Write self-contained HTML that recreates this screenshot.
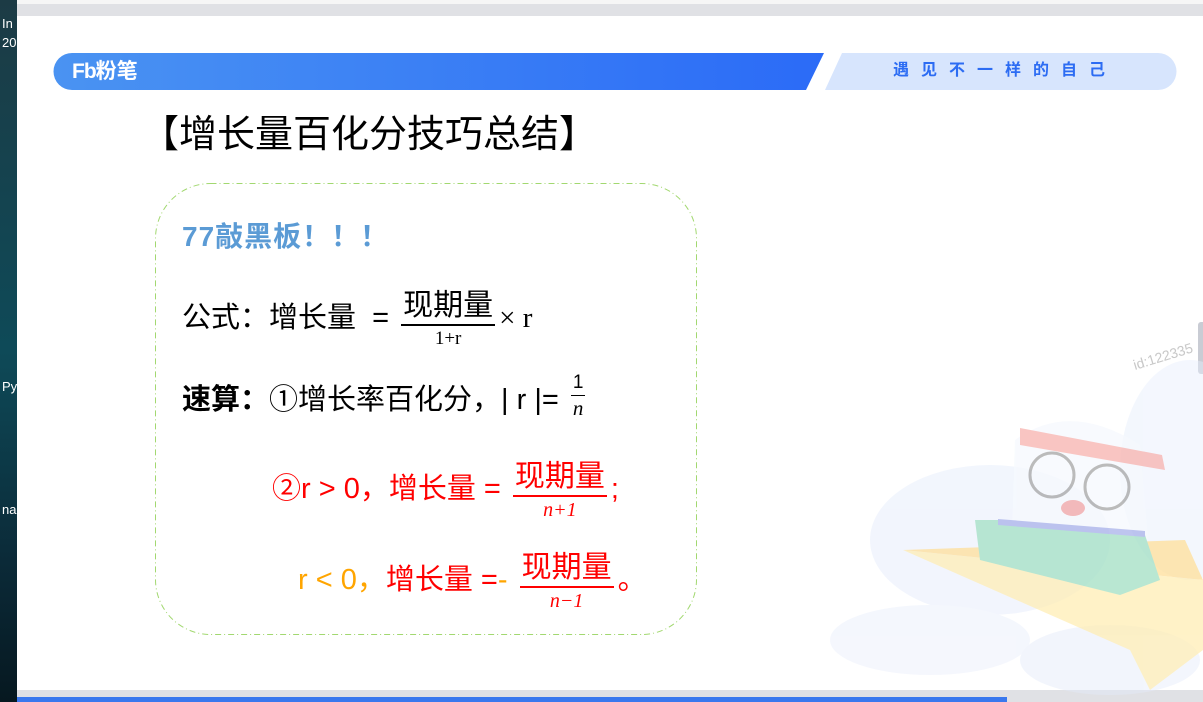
<!DOCTYPE html>
<html><head><meta charset="utf-8"><style>
*{margin:0;padding:0;box-sizing:border-box}
body{width:1203px;height:702px;overflow:hidden;background:#fff;position:relative;font-family:"Liberation Sans","Noto Sans CJK SC",sans-serif}
.a{position:absolute;white-space:nowrap;line-height:1}
.f{display:inline-block;vertical-align:middle;text-align:center;margin:0 4px}
.f .n{display:block;border-bottom:2px solid currentColor;padding:0 2px 2px}
.f .d{display:block;font-family:"Liberation Serif","DejaVu Serif",serif;font-style:italic;font-size:20px;padding-top:3px}
</style></head><body>
<div class="a" style="left:0;top:0;width:17px;height:702px;background:linear-gradient(#1c3b45,#0e4a58 50%,#0b2a38 80%,#061820)"></div>
<div class="a" style="left:2px;top:14px;color:#fff;font-size:13px;line-height:19px">In<br>20</div>
<div class="a" style="left:2px;top:380px;color:#fff;font-size:13px">Py</div>
<div class="a" style="left:2px;top:503px;color:#fff;font-size:13px">na</div>
<div class="a" style="left:17px;top:0;width:1186px;height:5px;background:#f6f6f6"></div>
<div class="a" style="left:17px;top:4px;width:1186px;height:12px;background:#e0e1e5"></div>
<div class="a" style="left:17px;top:690px;width:1186px;height:12px;background:#e0e1e5"></div>
<div class="a" style="left:17px;top:697px;width:990px;height:5px;background:#3a78ee"></div>
<div class="a" style="left:1198px;top:322px;width:5px;height:52px;background:#c9ccd4;border-radius:3px 0 0 3px"></div>

<svg class="a" style="left:0;top:0" width="1203" height="702">
<defs><linearGradient id="g" x1="0" x2="1"><stop offset="0" stop-color="#4a93f2"/><stop offset="1" stop-color="#2b6bf7"/></linearGradient></defs>
<path d="M72 53 H824 L806 90 H72 A18.5 18.5 0 0 1 72 53Z" fill="url(#g)"/>
<path d="M842 53 H1158 A18.5 18.5 0 0 1 1158 90 H825Z" fill="#d7e5fd"/>
<g opacity="0.45">
<ellipse cx="990" cy="540" rx="120" ry="75" fill="#e3ebfb"/>
<ellipse cx="1190" cy="470" rx="70" ry="110" fill="#e6eefc"/>
<ellipse cx="930" cy="640" rx="100" ry="35" fill="#e8eefb"/>
<ellipse cx="1110" cy="660" rx="90" ry="35" fill="#e4eafa"/>
</g>
<g opacity="0.75">
<path d="M903 550 L1203 580 L1203 650 L1150 690 L1130 650Z" fill="#ffeeb5"/>
<path d="M903 550 L1185 540 L1203 580Z" fill="#ffdf9a"/>
<path d="M1015 440 Q1070 400 1140 445 L1148 540 Q1080 556 1012 530Z" fill="#f6f9fe"/>
<path d="M1020 428 L1162 455 L1165 470 L1020 445Z" fill="#f7b2ae"/>
<path d="M975 520 L1000 520 L1145 535 L1160 580 L1120 595 L980 560Z" fill="#a2e0c4"/>
<path d="M998 519 L1145 531 L1145 537 L998 525Z" fill="#a9b2ea"/>
<circle cx="1052" cy="475" r="22" fill="none" stroke="#a5a5a5" stroke-width="3"/>
<circle cx="1107" cy="487" r="22" fill="none" stroke="#a5a5a5" stroke-width="3"/>
<ellipse cx="1073" cy="508" rx="12" ry="8" fill="#f3a5a5"/>
</g>
<text x="1135" y="370" transform="rotate(-17 1135 370)" font-size="14" fill="#c8c8c8" font-family="Liberation Sans">id:122335</text>
<rect x="155.5" y="183.5" width="541" height="451" rx="55" fill="none" stroke="#a2d870" stroke-dasharray="6 3 1 3"/>
</svg>

<div class="a" style="left:72px;top:61px;color:#fff;font-size:21px;font-weight:bold;letter-spacing:-1px">Fb<span style="letter-spacing:0">粉笔</span></div>
<div class="a" style="left:893px;top:63px;color:#2c6cf3;font-size:16px;font-weight:bold;letter-spacing:12px">遇见不一样的自己</div>

<div class="a" style="left:141px;top:116px;font-size:38px;color:#000">【增长量百化分技巧总结】</div>

<div class="a" style="left:182px;top:223px;font-size:28px;font-weight:bold;color:#5b9bd5;letter-spacing:1px">77敲黑板！！！</div>

<div class="a" style="left:182px;top:283px;font-size:29px;color:#000;line-height:70px">公式：增长量 &nbsp;= <span class="f"><span class="n" style="font-size:30px;line-height:32px">现期量</span><span class="d" style="font-style:normal;font-size:19px;line-height:20px">1+r</span></span><span style="font-family:'Liberation Serif',serif">× r</span></div>

<div class="a" style="left:182px;top:372px;font-size:29px;color:#000;line-height:56px"><b>速算：</b>①增长率百化分，| r |= <span class="f" style="vertical-align:-6px"><span class="n" style="font-size:19px;line-height:20px;border-width:1.5px">1</span><span class="d" style="font-size:21px;line-height:18px">n</span></span></div>

<div class="a" style="left:272px;top:454px;font-size:29px;color:#f00;line-height:70px">②r &gt; 0，增长量 = <span class="f"><span class="n" style="font-size:30px;line-height:32px">现期量</span><span class="d" style="line-height:20px">n+1</span></span>;</div>

<div class="a" style="left:298px;top:545px;font-size:29px;color:#f00;line-height:70px"><span style="color:#ffa500">r &lt; 0，</span>增长量 =<span style="color:#ffa500">-</span> <span class="f"><span class="n" style="font-size:30px;line-height:32px">现期量</span><span class="d" style="line-height:20px">n−1</span></span>。</div>
</body></html>
